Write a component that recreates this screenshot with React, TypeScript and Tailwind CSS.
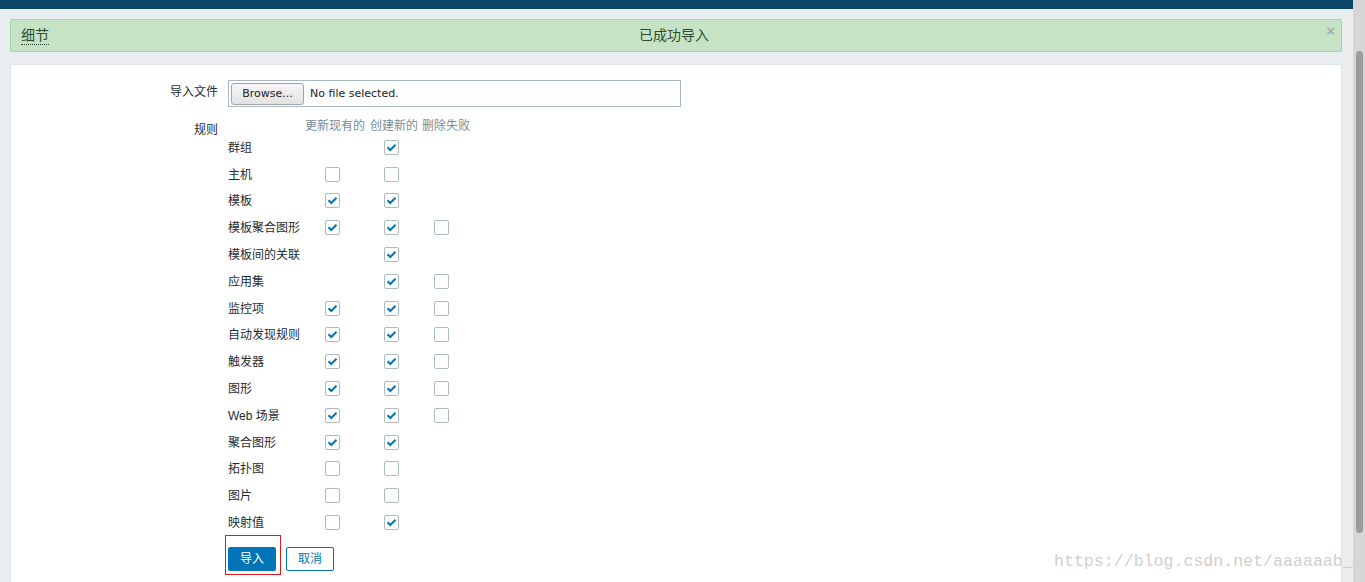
import React from "react";

type Cell = boolean | null;

const rows: { label: string; v: [Cell, Cell, Cell] }[] = [
  { label: "群组", v: [null, true, null] },
  { label: "主机", v: [false, false, null] },
  { label: "模板", v: [true, true, null] },
  { label: "模板聚合图形", v: [true, true, false] },
  { label: "模板间的关联", v: [null, true, null] },
  { label: "应用集", v: [null, true, false] },
  { label: "监控项", v: [true, true, false] },
  { label: "自动发现规则", v: [true, true, false] },
  { label: "触发器", v: [true, true, false] },
  { label: "图形", v: [true, true, false] },
  { label: "Web 场景", v: [true, true, false] },
  { label: "聚合图形", v: [true, true, null] },
  { label: "拓扑图", v: [false, false, null] },
  { label: "图片", v: [false, false, null] },
  { label: "映射值", v: [false, true, null] },
];

const font = { fontFamily: '"Liberation Sans", "Noto Sans CJK SC", sans-serif' };

function Box({ checked }: { checked: boolean }) {
  return (
    <div className="w-[15px] h-[15px] border border-[#acbbc2] rounded-[2px] bg-white flex items-center justify-center">
      {checked && (
        <svg width="13" height="13" viewBox="0 0 13 13">
          <path d="M2.5 6.2 L5.3 9 L10.5 3.8" fill="none" stroke="#0275b8" strokeWidth="2" />
        </svg>
      )}
    </div>
  );
}

export default function App() {
  return (
    <div className="relative flex h-[582px] w-full overflow-hidden bg-[#ebeef0] text-[12px] text-[#1f2c33]" style={font}>
      <div className="flex-1 flex flex-col min-w-0">
        <div className="h-[9px] bg-[#0b466a]" />
        <div className="pl-[10px] pr-[11px] pt-[10px]">
          <div className="relative h-[33px] border border-[#a6d6a7] rounded-[2px] bg-[#c6e3c6] flex items-center px-[10px] text-[#2f4a30]">
            <span className="text-[14px] leading-[18px] border-b border-dotted border-[#2f4a30]">细节</span>
            <span className="flex-1 text-center text-[14px] pr-[32px]">已成功导入</span>
            <span className="absolute right-[6px] top-[3px] text-[#9fb0ad] text-[15px] leading-[15px] font-bold">×</span>
          </div>
        </div>
        <div className="ml-[10px] mr-[11px] mt-[12px] flex-1 bg-white border border-[#dfe4e7] border-b-0 pt-[15px]">
          <div className="flex gap-[10px]">
            <div className="w-[207px] text-right pt-[5px] leading-[14px]">导入文件</div>
            <div className="w-[453px] h-[27px] border border-[#a8b8c2] flex items-center pl-[2px]" style={{ fontFamily: '"DejaVu Sans", sans-serif' }}>
              <div className="w-[73px] h-[22px] border border-[#a3a3a3] rounded-[3px] bg-gradient-to-b from-[#f6f6f6] to-[#e2e2e2] flex items-center justify-center text-[11px] text-[#222] pt-[2px]">
                Browse...
              </div>
              <span className="ml-[6px] text-[11px] text-[#222] pt-[2px]">No file selected.</span>
            </div>
          </div>
          <div className="flex gap-[10px] mt-[11px]">
            <div className="w-[207px] text-right pt-[5px] leading-[14px]">规则</div>
            <div className="flex flex-col">
              <div className="h-[16px] leading-[16px] pl-[77px] text-[#768d99] flex">
                <span>更新现有的</span>
                <span className="ml-[5px]">创建新的</span>
                <span className="ml-[4px]">删除失败</span>
              </div>
              {rows.map((r) => (
                <div key={r.label} className="h-[26.8px] grid grid-cols-[97px_59px_50px_15px] items-center">
                  <span className="leading-[14px] pt-[1px]">{r.label}</span>
                  {r.v.map((c, i) => (
                    <div key={i}>{c !== null && <Box checked={c} />}</div>
                  ))}
                </div>
              ))}
              <div className="flex gap-[10px] mt-[11px]">
                <div className="relative">
                  <div className="absolute -top-[12px] -left-[3px] -right-[5px] -bottom-[4px] border border-[#e3191c]" />
                  <button className="w-[48px] h-[24px] bg-[#0275b8] text-white rounded-[2px] text-[12px]">导入</button>
                </div>
                <button className="w-[48px] h-[24px] bg-white text-[#0275b8] border border-[#0275b8] rounded-[2px] text-[12px]">取消</button>
              </div>
            </div>
          </div>
        </div>
      </div>
      <div
        className="absolute left-[1054px] top-[550px] text-[16.6px] leading-[24px] text-[#cfcfcf] whitespace-nowrap"
        style={{ fontFamily: '"Liberation Mono", monospace' }}
      >
        https://blog.csdn.net/aaaaaab_
      </div>
      <div className="relative z-10 w-[12px] bg-[#d6d6d6] pt-[51px]">
        <div className="ml-[3px] w-[7px] h-[482px] rounded-full bg-[#9b9b9b]" />
      </div>
    </div>
  );
}
